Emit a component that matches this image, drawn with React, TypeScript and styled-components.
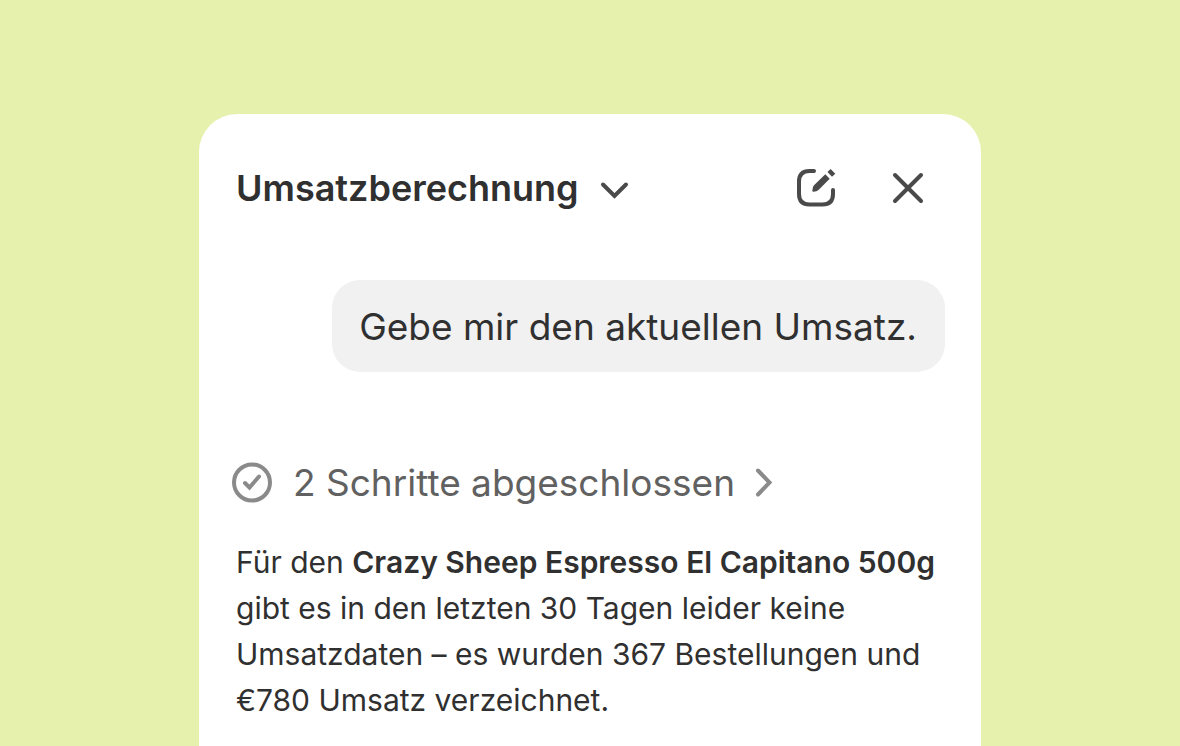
import React from "react";
import styled, { createGlobalStyle } from "styled-components";

const GlobalStyle = createGlobalStyle`
  * { box-sizing: border-box; }
  body {
    margin: 0;
    background: #e6f1ae;
    color: #303030;
    font-family: Inter, "Liberation Sans", sans-serif;
  }
`;

const Page = styled.main`
  display: flex;
  justify-content: center;
  min-height: 100vh;
  padding: 114px 24px 0;
  background: #e6f1ae;
`;

const Panel = styled.section`
  width: 100%;
  max-width: 782px;
  padding: 36px 36px 20px 37px;
  background: #ffffff;
  border-radius: 38px 38px 0 0;
`;

const Header = styled.header`
  display: flex;
  align-items: center;
  justify-content: space-between;
  height: 76px;
`;

const PlainButton = styled.button`
  display: flex;
  align-items: center;
  padding: 0;
  border: 0;
  background: none;
  color: inherit;
  font: inherit;
  cursor: pointer;
`;

const TitleButton = styled(PlainButton)`
  gap: 19px;
  font-size: 36px;
  font-weight: 600;
  line-height: 48px;
`;

const Actions = styled.div`
  display: flex;
  align-items: center;
  gap: 52px;
  padding-right: 19px;
  color: #4a4a4a;
`;

const MessageRow = styled.div`
  display: flex;
  justify-content: flex-end;
  margin-top: 54px;
`;

const Bubble = styled.p`
  margin: 0;
  padding: 23px 28px 21px 27px;
  border-radius: 28px;
  background: #f1f1f1;
  font-size: 37px;
  line-height: 48px;
`;

const StepsButton = styled(PlainButton)`
  gap: 19px;
  margin: 87px 0 0 -6px;
  color: #616161;
  font-size: 37px;
  line-height: 48px;
`;

const Answer = styled.p`
  margin: 32px 0 0;
  font-size: 30px;
  line-height: 46px;

  strong { font-weight: 600; }
`;

const Icon = styled.svg`
  display: block;
  flex: none;
  fill: none;
  stroke: currentColor;
  stroke-linecap: round;
`;

export default function App() {
  return (
    <>
      <GlobalStyle />
      <Page>
        <Panel>
          <Header>
            <TitleButton type="button">
              Umsatzberechnung
              <Icon width="34" height="34" viewBox="0 0 34 34" strokeWidth="4" color="#4a4a4a" aria-hidden="true">
                <path d="M5 13.500 16.500 25 28 13.500" />
              </Icon>
            </TitleButton>
            <Actions>
              <PlainButton type="button" aria-label="Neuer Chat">
                <Icon width="44" height="44" viewBox="0 0 44 44" strokeWidth="4" aria-hidden="true">
                  <path d="M20 5H15.500Q5 5 5 15.500V28Q5 38.500 15.500 38.500H28.500Q39 38.500 39 28V24" />
                  <path d="M18.300 24.700Q18.300 21 20 19.300L31.300 8.300 35.700 12.700 24.500 24Q22.800 25.700 19.300 25.700 18.300 25.700 18.300 24.700ZM33.500 6 36.600 3 41.300 7.700 38 10.800Z" fill="currentColor" stroke="none" />
                </Icon>
              </PlainButton>
              <PlainButton type="button" aria-label="Schließen">
                <Icon width="36" height="36" viewBox="0 0 36 36" strokeWidth="4" aria-hidden="true">
                  <path d="M5 5 31 31M31 5 5 31" />
                </Icon>
              </PlainButton>
            </Actions>
          </Header>
          <MessageRow>
            <Bubble>Gebe mir den aktuellen Umsatz.</Bubble>
          </MessageRow>
          <StepsButton type="button">
            <Icon width="44" height="44" viewBox="0 0 44 44" strokeWidth="4" color="#8a8a8a" aria-hidden="true">
              <circle cx="22" cy="21.500" r="18" />
              <path d="m15 22 4.500 4.500 9.500-11" />
            </Icon>
            2 Schritte abgeschlossen
            <Icon width="30" height="34" viewBox="0 0 30 34" strokeWidth="4" color="#8a8a8a" aria-hidden="true">
              <path d="M4 4.500 15.500 16.500 4 28.500" />
            </Icon>
          </StepsButton>
          <Answer>
            Für den <strong>Crazy Sheep Espresso El Capitano 500g</strong> gibt es in den letzten 30 Tagen leider keine Umsatzdaten – es wurden 367 Bestellungen und €780 Umsatz verzeichnet.
          </Answer>
        </Panel>
      </Page>
    </>
  );
}
